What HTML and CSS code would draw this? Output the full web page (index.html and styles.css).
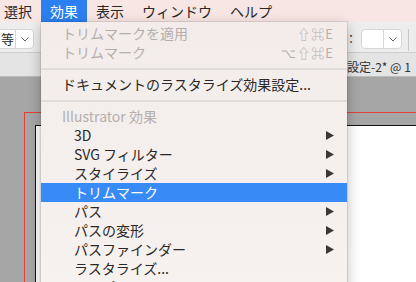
FILE: index.html
```html
<!DOCTYPE html>
<html lang="ja">
<head>
  <meta charset="UTF-8">
  <title>効果メニュー</title>
  <link rel="stylesheet" href="styles.css">
</head>
<body>
  <div class="menubar">
    <span class="menubar-item first">選択</span>
    <span class="menubar-item active">効果</span>
    <span class="menubar-item">表示</span>
    <span class="menubar-item">ウィンドウ</span>
    <span class="menubar-item">ヘルプ</span>
  </div>

  <div class="workspace">
    <div class="toolbar">
      <div class="select select-left">
        <span class="select-value">等</span>
        <span class="select-arrow">
          <svg width="8" height="5" viewBox="0 0 8 5"><polyline points="0.5,0.5 4,4 7.5,0.5"/></svg>
        </span>
      </div>
      <div class="toolbar-right">
        <span class="toolbar-label">ン：</span>
        <div class="select">
          <span class="select-value"></span>
          <span class="select-arrow">
            <svg width="8" height="5" viewBox="0 0 8 5"><polyline points="0.5,0.5 4,4 7.5,0.5"/></svg>
          </span>
        </div>
        <span class="toolbar-sep"></span>
      </div>
    </div>
    <div class="tabbar">
      <span class="tab-title">設定-2* @ 1</span>
    </div>
    <div class="canvas">
      <div class="bleed">
        <div class="artboard"></div>
      </div>
    </div>
  </div>

  <div class="menu">
    <div class="menu-item disabled">
      <span>トリムマークを適用</span>
      <span class="shortcut">⇧⌘E</span>
    </div>
    <div class="menu-item disabled">
      <span>トリムマーク</span>
      <span class="shortcut">⌥⇧⌘E</span>
    </div>
    <div class="menu-sep"></div>
    <div class="menu-item">
      <span>ドキュメントのラスタライズ効果設定...</span>
    </div>
    <div class="menu-sep"></div>
    <div class="menu-item disabled">
      <span>Illustrator 効果</span>
    </div>
    <div class="menu-item sub">
      <span>3D</span>
      <svg class="arrow" width="8" height="9" viewBox="0 0 8 9"><polygon points="0,0 8,4.5 0,9"/></svg>
    </div>
    <div class="menu-item sub">
      <span>SVG フィルター</span>
      <svg class="arrow" width="8" height="9" viewBox="0 0 8 9"><polygon points="0,0 8,4.5 0,9"/></svg>
    </div>
    <div class="menu-item sub">
      <span>スタイライズ</span>
      <svg class="arrow" width="8" height="9" viewBox="0 0 8 9"><polygon points="0,0 8,4.5 0,9"/></svg>
    </div>
    <div class="menu-item sub selected">
      <span>トリムマーク</span>
    </div>
    <div class="menu-item sub">
      <span>パス</span>
      <svg class="arrow" width="8" height="9" viewBox="0 0 8 9"><polygon points="0,0 8,4.5 0,9"/></svg>
    </div>
    <div class="menu-item sub">
      <span>パスの変形</span>
      <svg class="arrow" width="8" height="9" viewBox="0 0 8 9"><polygon points="0,0 8,4.5 0,9"/></svg>
    </div>
    <div class="menu-item sub">
      <span>パスファインダー</span>
      <svg class="arrow" width="8" height="9" viewBox="0 0 8 9"><polygon points="0,0 8,4.5 0,9"/></svg>
    </div>
    <div class="menu-item sub">
      <span>ラスタライズ...</span>
    </div>
    <div class="menu-item sub">
      <span>ワープ</span>
      <svg class="arrow" width="8" height="9" viewBox="0 0 8 9"><polygon points="0,0 8,4.5 0,9"/></svg>
    </div>
  </div>
</body>
</html>
```

FILE: styles.css
```css
body {
  font-family: 'Noto Sans CJK JP', 'Noto Sans', sans-serif;
  width: 416px;
  height: 282px;
  margin: 0;
  padding: 0;
  overflow: hidden;
  position: relative;
  color: #2a2827;
}

.menubar {
  display: flex;
  height: 22px;
  background: #f7e6e3;
  font-size: 14px;
  line-height: 22px;
}

.menubar-item {
  padding: 0 9px;
  white-space: nowrap;
}

.menubar-item.first {
  padding-left: 4px;
}

.menubar-item.active {
  background: #2b7ff0;
  color: white;
}

.workspace {
  height: 260px;
  display: flex;
  flex-direction: column;
  overflow: hidden;
}

.toolbar {
  display: flex;
  align-items: flex-start;
  height: 31px;
  padding: 7px 7px 0 0;
  box-sizing: border-box;
  background: #ededed;
  border-bottom: 1px solid #cdcdcd;
}

.select {
  display: flex;
  height: 20px;
  background: white;
  border: 1px solid #d6d6d6;
  border-radius: 4px;
  box-sizing: border-box;
}

.select-left {
  margin-left: -8px;
}

.select-value {
  width: 20px;
  font-size: 13px;
  line-height: 18px;
  text-align: right;
  padding-right: 1px;
  border-right: 1px solid #d6d6d6;
}

.select-left .select-value {
  width: 21px;
}

.select-arrow {
  width: 17px;
  display: flex;
  align-items: center;
  justify-content: center;
}

.select-arrow svg {
  fill: none;
  stroke: #666;
  stroke-width: 1;
}

.toolbar-right {
  display: flex;
  align-items: flex-start;
  margin-left: auto;
}

.toolbar-label {
  font-size: 12px;
  line-height: 20px;
  margin-right: 4px;
  color: #333;
}

.toolbar-sep {
  width: 1px;
  height: 22px;
  background: #c8c8c8;
  margin-left: 6px;
}

.tabbar {
  height: 23px;
  background: #e4e4e4;
  border-bottom: 1px solid #bcbcbc;
  padding-left: 347px;
  font-size: 12px;
  line-height: 27px;
  white-space: nowrap;
  overflow: hidden;
  color: #333;
}

.canvas {
  flex: 1;
  background: #a6a6a6;
  padding: 35px 0 0 24px;
  overflow: hidden;
}

.bleed {
  height: 300px;
  border-top: 1px solid #e3403c;
  border-left: 1px solid #e3403c;
  padding: 12px 0 0 10px;
}

.artboard {
  height: 300px;
  background: white;
  border-top: 1px solid #111;
  border-left: 1px solid #111;
}

.menu {
  position: absolute;
  top: 22px;
  left: 41px;
  bottom: -10px;
  width: 306px;
  padding-top: 2px;
  overflow: hidden;
  background: linear-gradient(#f3ecea, #f6f2ef);
  box-shadow: 0 0 0 1px rgba(0, 0, 0, 0.08), 0 4px 12px rgba(0, 0, 0, 0.28);
  font-size: 14px;
  line-height: 19px;
}

.menu-item {
  display: flex;
  align-items: center;
  justify-content: space-between;
  height: 19px;
  padding: 0 13px 0 21px;
  white-space: nowrap;
}

.menu-item.sub {
  padding-left: 33px;
}

.menu-item.disabled {
  color: #b4afad;
}

.menu-item.selected {
  background: #388bf6;
  color: white;
}

.shortcut {
  font-size: 13px;
  letter-spacing: 1px;
}

.arrow {
  fill: #3a3837;
}

.menu-sep {
  height: 2px;
  margin: 6px 0 5px;
  background: #e2dcd9;
}
```
